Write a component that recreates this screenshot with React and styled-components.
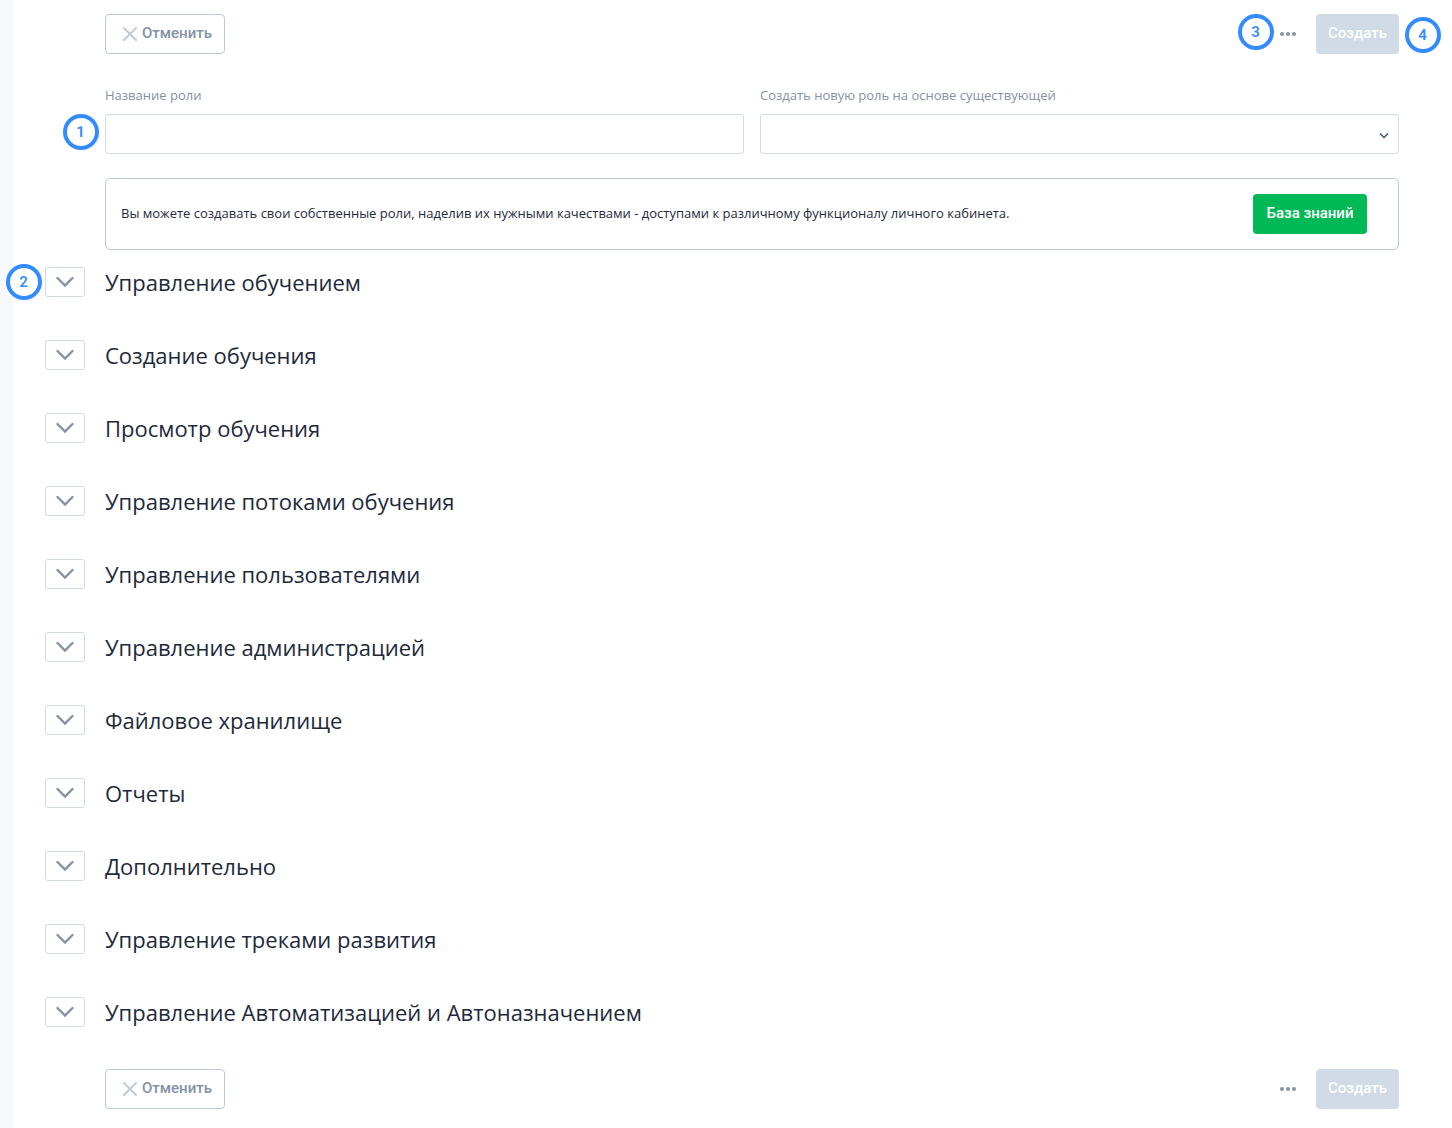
import React, { useState } from 'react';
import styled, { createGlobalStyle } from 'styled-components';

const SECTIONS = [
    'Управление обучением',
    'Создание обучения',
    'Просмотр обучения',
    'Управление потоками обучения',
    'Управление пользователями',
    'Управление администрацией',
    'Файловое хранилище',
    'Отчеты',
    'Дополнительно',
    'Управление треками развития',
    'Управление Автоматизацией и Автоназначением',
];

function Toolbar({ marked }) {
    return (
        <Bar>
            <CancelButton type="button">
                <svg width="14" height="14" viewBox="0 0 14 14" aria-hidden="true">
                    <path d="M1 1L13 13M13 1L1 13" stroke="currentColor" strokeWidth="2" strokeLinecap="round" />
                </svg>
                Отменить
            </CancelButton>
            <Actions>
                <Anchor>
                    <MoreButton type="button" aria-label="Еще">
                        <svg width="16" height="4" viewBox="0 0 16 4" aria-hidden="true">
                            <circle cx="2" cy="2" r="2" />
                            <circle cx="8" cy="2" r="2" />
                            <circle cx="14" cy="2" r="2" />
                        </svg>
                    </MoreButton>
                    {marked && <Badge $left="-42px" $top="0">3</Badge>}
                </Anchor>
                <Anchor>
                    <CreateButton type="submit" disabled>Создать</CreateButton>
                    {marked && <Badge $left="calc(100% + 6px)" $top="3px">4</Badge>}
                </Anchor>
            </Actions>
        </Bar>
    )
}

function Section({ title, mark }) {
    const [isOpen, setIsOpen] = useState(false);

    return (
        <SectionRow>
            <ToggleButton
                type="button"
                aria-label={title}
                aria-expanded={isOpen}
                $open={isOpen}
                onClick={() => setIsOpen(pre => !pre)}
            >
                <svg width="18" height="12" viewBox="0 0 18 12" aria-hidden="true">
                    <path d="M1.5 2L9 9.5L16.5 2" fill="none" stroke="currentColor" strokeWidth="2.4" strokeLinecap="round" />
                </svg>
            </ToggleButton>
            <h2>{title}</h2>
            {mark && <Badge $left="-39px" $top="-3px">{mark}</Badge>}
        </SectionRow>
    )
}

function App() {
    const [name, setName] = useState('');

    return (
        <>
            <GlobalStyle />
            <Page>
                <Indent>
                    <Toolbar marked />
                    <Fields>
                        <Field>
                            <label htmlFor="role-name">Название роли</label>
                            <Anchor>
                                <TextInput id="role-name" type="text" value={name} onChange={e => setName(e.target.value)} />
                                <Badge $left="-42px" $top="0">1</Badge>
                            </Anchor>
                        </Field>
                        <Field>
                            <label htmlFor="role-base">Создать новую роль на основе существующей</label>
                            <Anchor>
                                <Select id="role-base" defaultValue="">
                                    <option value=""></option>
                                </Select>
                                <SelectArrow width="10" height="6" viewBox="0 0 10 6" aria-hidden="true">
                                    <path d="M1 0.5L5 4.5L9 0.5" fill="none" stroke="#3e5674" strokeWidth="1.5" />
                                </SelectArrow>
                            </Anchor>
                        </Field>
                    </Fields>
                    <Hint>
                        <p>Вы можете создавать свои собственные роли, наделив их нужными качествами - доступами к различному функционалу личного кабинета.</p>
                        <KnowledgeLink href="#">База знаний</KnowledgeLink>
                    </Hint>
                </Indent>
                <Sections>
                    {SECTIONS.map((title, i) => (
                        <Section key={title} title={title} mark={i === 0 ? 2 : undefined} />
                    ))}
                </Sections>
                <Indent>
                    <Toolbar />
                </Indent>
            </Page>
        </>
    )
}

export default App;

const GlobalStyle = createGlobalStyle`
    *{
        box-sizing: border-box;
    }
    body{
        margin: 0;
        background: #fff;
        color: #1e2a3b;
        font-family: "Open Sans", "Noto Sans", sans-serif;
        font-size: 13px;
        line-height: 18px;
    }
    button, a{
        cursor: pointer;
    }
`

const Page = styled.main`
    min-height: 100vh;
    padding: 14px 53px 19px 32px;
    border-left: 13px solid #f8f9fe;
`

const Indent = styled.div`
    padding-left: 60px;
`

const Bar = styled.div`
    display: flex;
    align-items: center;
    justify-content: space-between;
`

const Actions = styled.div`
    display: flex;
    gap: 20px;
`

const Anchor = styled.div`
    position: relative;
`

const Badge = styled.span`
    position: absolute;
    left: ${({ $left }) => $left};
    top: ${({ $top }) => $top};
    display: flex;
    align-items: center;
    justify-content: center;
    width: 36px;
    height: 36px;
    padding-right: 1px;
    border: 4px solid #328cff;
    border-radius: 50%;
    color: #328cff;
    font-family: Roboto, sans-serif;
    font-size: 15px;
    font-weight: 600;
`

const Button = styled.button`
    display: flex;
    align-items: center;
    justify-content: center;
    height: 40px;
    padding: 0 12px 2px;
    border: none;
    border-radius: 4px;
    font-family: Roboto, sans-serif;
    font-size: 15px;
    font-weight: 500;
`

const CancelButton = styled(Button)`
    gap: 5px;
    padding: 0 12px 2px 17px;
    border: 1px solid #bbc8d8;
    background: #fff;
    color: #8492a6;
    svg{
        margin-top: 2px;
        color: #c0ccda;
    }
`

const MoreButton = styled(Button)`
    padding: 0;
    background: none;
    svg{
        fill: #8492a6;
    }
`

const CreateButton = styled(Button)`
    background: #d0dbe5;
    color: #fff;
`

const KnowledgeLink = styled(Button).attrs({ as: 'a' })`
    min-width: 114px;
    background: #00b956;
    color: #fff;
    text-decoration: none;
    white-space: nowrap;
`

const Fields = styled.div`
    display: grid;
    grid-template-columns: 1fr 1fr;
    gap: 16px;
    margin-top: 32px;
`

const Field = styled.div`
    display: flex;
    flex-direction: column;
    gap: 10px;
    label{
        color: #8492a6;
    }
`

const TextInput = styled.input`
    display: block;
    width: 100%;
    height: 40px;
    padding: 0 12px;
    border: 1px solid #d0dbe5;
    border-radius: 3px;
    background: #fff;
    color: inherit;
    font: inherit;
`

const Select = styled(TextInput).attrs({ as: 'select' })`
    appearance: none;
`

const SelectArrow = styled.svg`
    position: absolute;
    right: 10px;
    top: 19px;
    pointer-events: none;
`

const Hint = styled.div`
    display: flex;
    align-items: center;
    justify-content: space-between;
    gap: 20px;
    min-height: 72px;
    margin-top: 24px;
    padding: 15px 31px 15px 15px;
    border: 1px solid #bbc8d8;
    border-radius: 5px;
    p{
        margin: 0;
        padding-bottom: 2px;
    }
`

const Sections = styled.div`
    display: flex;
    flex-direction: column;
    gap: 43px;
    margin: 17px 0 42px;
`

const SectionRow = styled.section`
    position: relative;
    display: flex;
    align-items: center;
    gap: 20px;
    h2{
        margin: 0;
        font-size: 22px;
        font-weight: 400;
        line-height: 30px;
    }
`

const ToggleButton = styled.button`
    display: flex;
    align-items: center;
    justify-content: center;
    width: 40px;
    height: 30px;
    padding: 0;
    border: 1px solid #d0dbe5;
    border-radius: 3px;
    background: #fff;
    color: #8492a6;
    svg{
        transform: ${({ $open }) => $open ? 'rotate(180deg)' : 'none'};
    }
`
